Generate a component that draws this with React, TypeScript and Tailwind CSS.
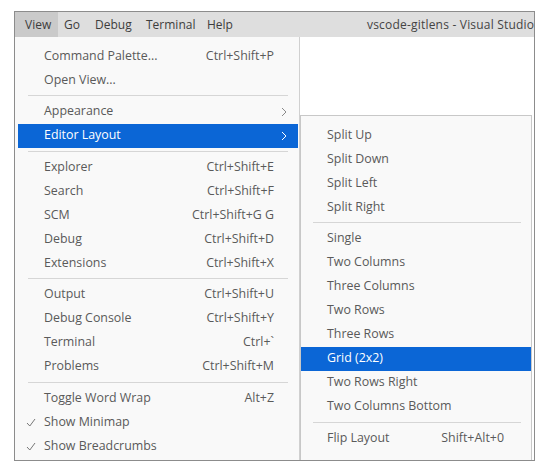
import React from "react";

// Entradas del menú View y del submenú Editor Layout
type Item = { label: string; keys?: string; sub?: boolean; check?: boolean; active?: boolean } | "sep";

const viewItems: Item[] = [
  { label: "Command Palette...", keys: "Ctrl+Shift+P" },
  { label: "Open View..." },
  "sep",
  { label: "Appearance", sub: true },
  { label: "Editor Layout", sub: true, active: true },
  "sep",
  { label: "Explorer", keys: "Ctrl+Shift+E" },
  { label: "Search", keys: "Ctrl+Shift+F" },
  { label: "SCM", keys: "Ctrl+Shift+G G" },
  { label: "Debug", keys: "Ctrl+Shift+D" },
  { label: "Extensions", keys: "Ctrl+Shift+X" },
  "sep",
  { label: "Output", keys: "Ctrl+Shift+U" },
  { label: "Debug Console", keys: "Ctrl+Shift+Y" },
  { label: "Terminal", keys: "Ctrl+`" },
  { label: "Problems", keys: "Ctrl+Shift+M" },
  "sep",
  { label: "Toggle Word Wrap", keys: "Alt+Z" },
  { label: "Show Minimap", check: true },
  { label: "Show Breadcrumbs", check: true },
];

const layoutItems: Item[] = [
  { label: "Split Up" },
  { label: "Split Down" },
  { label: "Split Left" },
  { label: "Split Right" },
  "sep",
  { label: "Single" },
  { label: "Two Columns" },
  { label: "Three Columns" },
  { label: "Two Rows" },
  { label: "Three Rows" },
  { label: "Grid (2x2)", active: true },
  { label: "Two Rows Right" },
  { label: "Two Columns Bottom" },
  "sep",
  { label: "Flip Layout", keys: "Shift+Alt+0" },
];

function Chevron({ white }: { white?: boolean }) {
  return (
    <svg width="6" height="10" viewBox="0 0 6 10" className="shrink-0">
      <path d="M1 1l4 4-4 4" fill="none" stroke={white ? "#ffffff" : "#8a8a8a"} strokeWidth="1" />
    </svg>
  );
}

function Check() {
  return (
    <svg width="10" height="9" viewBox="0 0 10 9">
      <path d="M1 5l2.8 3L9 1" fill="none" stroke="#777777" strokeWidth="1" />
    </svg>
  );
}

function MenuRow({ item, pr }: { item: Exclude<Item, "sep">; pr: string }) {
  return (
    <div
      className={`relative flex items-center h-[24px] pl-[26px] ${pr} ${
        item.active ? "bg-[#0b66d6] text-white" : "text-[#5a5a5a]"
      }`}
    >
      {item.check && (
        <span className="absolute left-[8px] top-[8px]">
          <Check />
        </span>
      )}
      <span className="flex-1 whitespace-nowrap">{item.label}</span>
      {item.keys && <span className="whitespace-nowrap">{item.keys}</span>}
      {item.sub && (
        <span className="absolute right-[11px] top-[7px]">
          <Chevron white={item.active} />
        </span>
      )}
    </div>
  );
}

function Separator({ mx }: { mx: string }) {
  return (
    <div className={`h-[7.5px] flex items-center ${mx}`}>
      <div className="h-px w-full bg-[#d6d6d6]" />
    </div>
  );
}

export default function App() {
  return (
    <div
      className="w-[553px] h-[472px] bg-white pt-[11px] pl-[14px] text-[12.4px]"
      style={{ fontFamily: '"Open Sans", "Noto Sans", sans-serif' }}
    >
      <div className="w-[521px] h-[450px] border border-[#8c8c8c] flex flex-col overflow-hidden">
        {/* barra de menú */}
        <div className="h-[25px] bg-[#dedede] flex items-stretch text-[#3d3d3d] text-[12px] shrink-0">
          <div className="w-[43px] pl-[10px] bg-[#cacaca] flex items-center">View</div>
          <div className="w-[29px] pl-[6px] flex items-center">Go</div>
          <div className="w-[52px] pl-[8px] flex items-center">Debug</div>
          <div className="w-[60px] pl-[7px] flex items-center">Terminal</div>
          <div className="w-[46px] pl-[8px] flex items-center">Help</div>
          <div className="flex-1 min-w-0 pl-[122px] flex items-center overflow-hidden whitespace-nowrap text-[#444444] tracking-[0.2px]">
            vscode-gitlens - Visual Studio Code
          </div>
        </div>

        <div className="flex-1 flex min-h-0">
          {/* menú View */}
          <div className="w-[285px] bg-[#f9f9f9] border-r border-[#d0d0d0] pt-[7px] pl-[3px] pr-px">
            {viewItems.map((it, i) =>
              it === "sep" ? (
                <Separator key={i} mx="mx-[10px]" />
              ) : (
                <MenuRow key={i} item={it} pr="pr-[24px]" />
              )
            )}
          </div>

          {/* zona derecha con el submenú */}
          <div className="flex-1 flex flex-col bg-white">
            <div className="h-[78px] shrink-0" />
            <div className="flex-1 mr-[2px] bg-[#f9f9f9] border border-b-0 border-[#c8c8c8] pt-[7px]">
              {layoutItems.map((it, i) =>
                it === "sep" ? (
                  <Separator key={i} mx="ml-[12px] mr-[10px]" />
                ) : (
                  <MenuRow key={i} item={it} pr="pr-[27px]" />
                )
              )}
            </div>
          </div>
        </div>
      </div>
    </div>
  );
}
